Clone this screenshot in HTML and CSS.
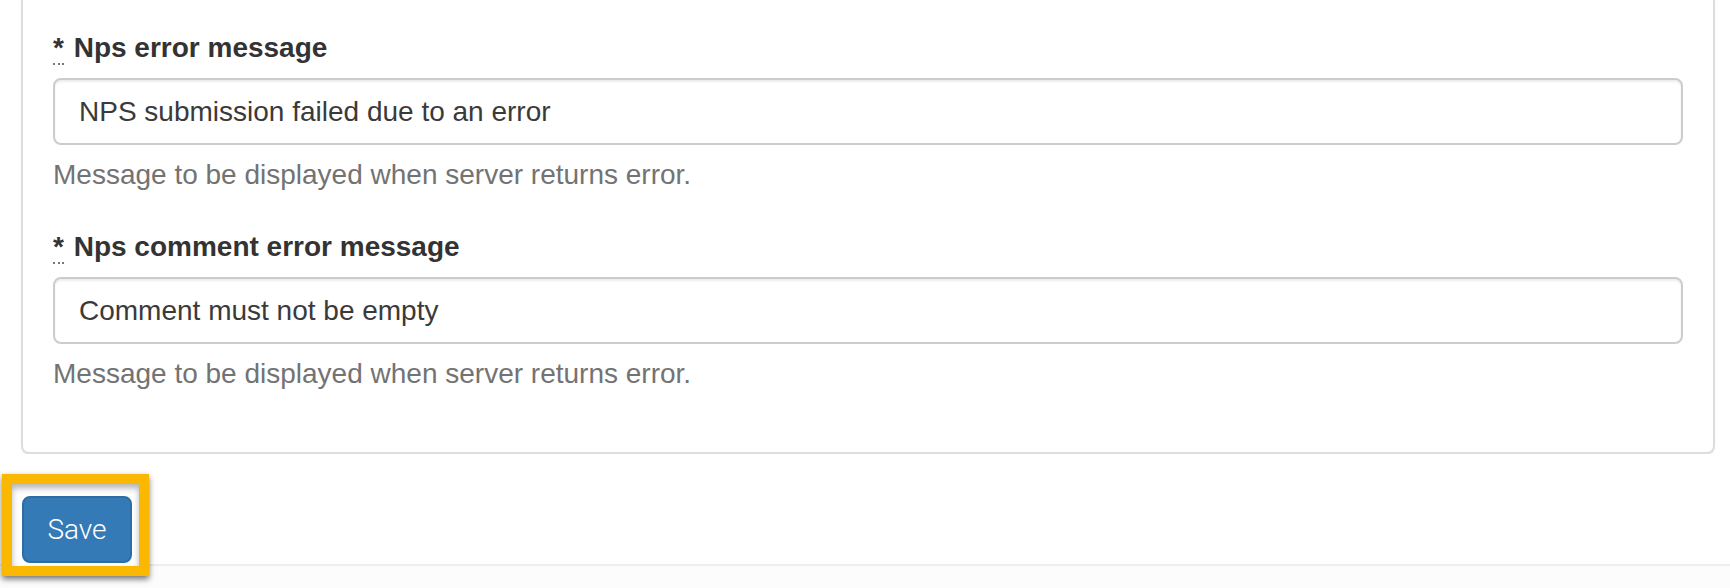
FILE: index.html
```html
<!DOCTYPE html>
<html>
<head>
<meta charset="utf-8">
<link rel="stylesheet" href="styles.css">
</head>
<body>
<div class="page">
  <div class="panel">
    <div class="form-group">
      <label class="label"><abbr class="req" title="required">*</abbr> Nps error message</label>
      <input class="input" type="text" value="NPS submission failed due to an error">
      <p class="help">Message to be displayed when server returns error.</p>
    </div>
    <div class="form-group">
      <label class="label"><abbr class="req" title="required">*</abbr> Nps comment error message</label>
      <input class="input" type="text" value="Comment must not be empty">
      <p class="help">Message to be displayed when server returns error.</p>
    </div>
  </div>
  <div class="footer">
    <div class="highlight"></div>
    <button class="btn" type="button">Save</button>
  </div>
</div>
</body>
</html>
```

FILE: styles.css
```css
html, body {
  margin: 0;
  padding: 0;
}
body {
  background: #fcfcfc;
  font-family: "Liberation Sans", Arial, Helvetica, sans-serif;
  font-size: 28px;
  line-height: 40px;
  color: #333;
  height: 588px;
  overflow: hidden;
}
.page {
  background: #fff;
  padding: 0 15px 0 0;
}
.panel {
  margin-left: 21px;
  border: 2px solid #ddd;
  border-top: none;
  border-radius: 0 0 8px 8px;
  box-shadow: 0 2px 2px rgba(0, 0, 0, 0.05);
  padding: 28px 30px 58px 30px;
  background: #fff;
}
.form-group {
  margin-bottom: 32px;
}
.form-group:last-child {
  margin-bottom: 0;
}
.label {
  display: block;
  font-weight: bold;
  margin-bottom: 10px;
  line-height: 40px;
}
.req {
  text-decoration: none;
  border-bottom: 2px dotted #777;
  cursor: help;
  margin-right: 2px;
}
.input {
  display: block;
  box-sizing: border-box;
  width: 100%;
  height: 67px;
  margin: 0;
  padding: 12px 24px;
  font-family: "Liberation Sans", Arial, Helvetica, sans-serif;
  font-size: 28px;
  line-height: 40px;
  color: #3a3a3a;
  background: #fff;
  border: 2px solid #ccc;
  border-radius: 8px;
  box-shadow: inset 0 2px 2px rgba(0, 0, 0, 0.075);
  outline: none;
}
.help {
  margin: 10px 0 0 0;
  color: #737373;
  line-height: 40px;
}
.footer {
  position: relative;
  margin-right: -15px;
  padding: 42px 0 1px 22px;
  border-bottom: 2px solid #eee;
  background: #fff;
}
.highlight {
  position: absolute;
  left: 2px;
  top: 20px;
  width: 127px;
  height: 82px;
  border: 10px solid #fbb800;
  background: #fff;
  box-shadow: 0 3px 6px rgba(0, 0, 0, 0.55), inset 0 4px 6px rgba(0, 0, 0, 0.3);
}
.btn {
  position: relative;
  z-index: 1;
  display: block;
  box-sizing: border-box;
  height: 67px;
  width: 110px;
  padding: 0;
  margin: 0;
  font-family: Roboto, "Liberation Sans", Arial, sans-serif;
  font-weight: 300;
  font-size: 28px;
  line-height: 63px;
  color: #fff;
  background: #337ab7;
  border: 2px solid #2e6da4;
  border-radius: 8px;
}
```
